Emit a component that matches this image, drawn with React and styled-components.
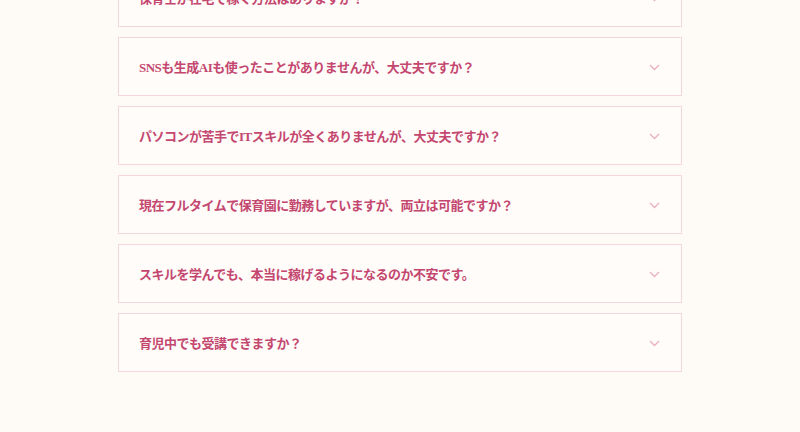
import styled, { createGlobalStyle } from "styled-components"

const Global = createGlobalStyle`
    html, body {
        margin: 0;
        padding: 0;
        background: #fefbf7;
    }
    body {
        font-family: "Liberation Serif", "Noto Sans CJK JP", serif;
        overflow: hidden;
    }
`

const Section = styled.section`
    width: 100%;
    height: 432px;
    overflow: hidden;
    background: #fefbf7;
`

const List = styled.div`
    width: 564px;
    margin: -32px auto 0;
    display: flex;
    flex-direction: column;
    gap: 10px;
`

const Item = styled.div`
    height: 57px;
    background: #fffcfa;
    border: 1px solid #f5d6dc;
    display: flex;
    align-items: center;
    justify-content: space-between;
    padding: 0 21px 0 20px;
    box-sizing: content-box;
    width: calc(100% - 43px);
`

const Question = styled.span`
    font-size: 13px;
    font-weight: 600;
    color: #c4476f;
    letter-spacing: -0.5px;
`

const Chevron = styled.svg`
    width: 11px;
    height: 7px;
    flex-shrink: 0;
    margin-top: 1px;
`

const questions = [
    "保育士が在宅で稼ぐ方法はありますか？",
    "SNSも生成AIも使ったことがありませんが、大丈夫ですか？",
    "パソコンが苦手でITスキルが全くありませんが、大丈夫ですか？",
    "現在フルタイムで保育園に勤務していますが、両立は可能ですか？",
    "スキルを学んでも、本当に稼げるようになるのか不安です。",
    "育児中でも受講できますか？",
]

const App = () => {
    return (
        <Section>
            <Global />
            <List>
                {questions.map((q) => (
                    <Item key={q}>
                        <Question>{q}</Question>
                        <Chevron viewBox="0 0 11 7">
                            <path d="M1 1 L5.5 5.5 L10 1" fill="none" stroke="#eab0bf" strokeWidth="1.3" />
                        </Chevron>
                    </Item>
                ))}
            </List>
        </Section>
    )
}

export default App
